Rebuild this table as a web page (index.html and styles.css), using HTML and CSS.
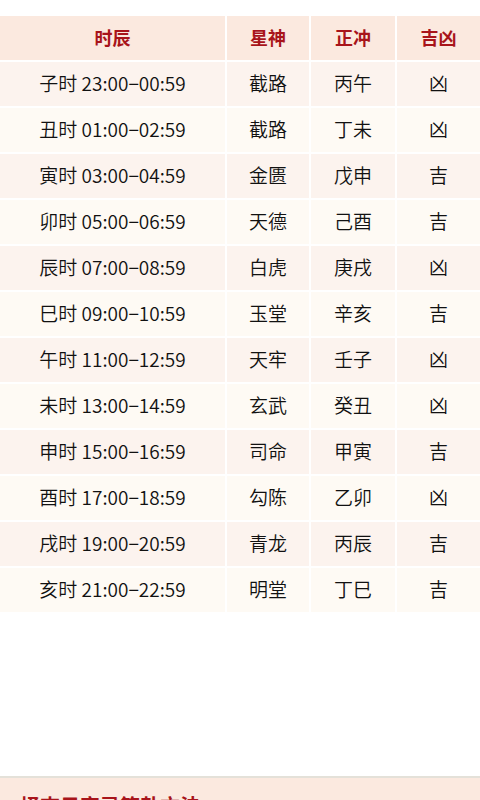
FILE: index.html
```html
<!DOCTYPE html>
<html lang="zh">
<head>
<meta charset="utf-8">
<link rel="stylesheet" href="styles.css">
</head>
<body>
<div class="page">
  <div class="table">
    <div class="row head"><div>时辰</div><div>星神</div><div>正冲</div><div>吉凶</div></div>
    <div class="row odd"><div>子时 23:00−00:59</div><div>截路</div><div>丙午</div><div>凶</div></div>
    <div class="row even"><div>丑时 01:00−02:59</div><div>截路</div><div>丁未</div><div>凶</div></div>
    <div class="row odd"><div>寅时 03:00−04:59</div><div>金匮</div><div>戊申</div><div>吉</div></div>
    <div class="row even"><div>卯时 05:00−06:59</div><div>天德</div><div>己酉</div><div>吉</div></div>
    <div class="row odd"><div>辰时 07:00−08:59</div><div>白虎</div><div>庚戌</div><div>凶</div></div>
    <div class="row even"><div>巳时 09:00−10:59</div><div>玉堂</div><div>辛亥</div><div>吉</div></div>
    <div class="row odd"><div>午时 11:00−12:59</div><div>天牢</div><div>壬子</div><div>凶</div></div>
    <div class="row even"><div>未时 13:00−14:59</div><div>玄武</div><div>癸丑</div><div>凶</div></div>
    <div class="row odd"><div>申时 15:00−16:59</div><div>司命</div><div>甲寅</div><div>吉</div></div>
    <div class="row even"><div>酉时 17:00−18:59</div><div>勾陈</div><div>乙卯</div><div>凶</div></div>
    <div class="row odd"><div>戌时 19:00−20:59</div><div>青龙</div><div>丙辰</div><div>吉</div></div>
    <div class="row even"><div>亥时 21:00−22:59</div><div>明堂</div><div>丁巳</div><div>吉</div></div>
  </div>
  <div class="section">
    <h2 class="section-title">择吉日宜忌算卦方法</h2>
  </div>
</div>
</body>
</html>
```
FILE: styles.css
```css
html, body {
  margin: 0;
  padding: 0;
  background: #ffffff;
}
body {
  font-family: "Noto Sans CJK SC", sans-serif;
  color: #111111;
  width: 480px;
  height: 800px;
  overflow: hidden;
}
.page {
  padding-top: 16px;
}
.table {
  display: flex;
  flex-direction: column;
  gap: 2px;
}
.row {
  display: grid;
  grid-template-columns: 225px 82px 84px 83px;
  column-gap: 2px;
  height: 44px;
}
.row > div {
  display: flex;
  align-items: center;
  justify-content: center;
  font-size: 19px;
  font-weight: 350;
  line-height: 1;
  padding-bottom: 3px;
}
.head > div {
  background: #fbe9df;
  color: #a8141a;
  font-weight: 700;
  font-size: 18px;
  padding-bottom: 2px;
}
.odd > div {
  background: #fcf3ee;
}
.even > div {
  background: #fefaf4;
}
.section {
  margin-top: 164px;
  border-top: 2px solid #e4e1d9;
  background: #fbe9df;
  height: 40px;
  padding: 16px 20px 0;
}
.section-title {
  margin: 0;
  font-size: 20px;
  font-weight: 700;
  color: #a8141a;
  line-height: 24px;
}
```
